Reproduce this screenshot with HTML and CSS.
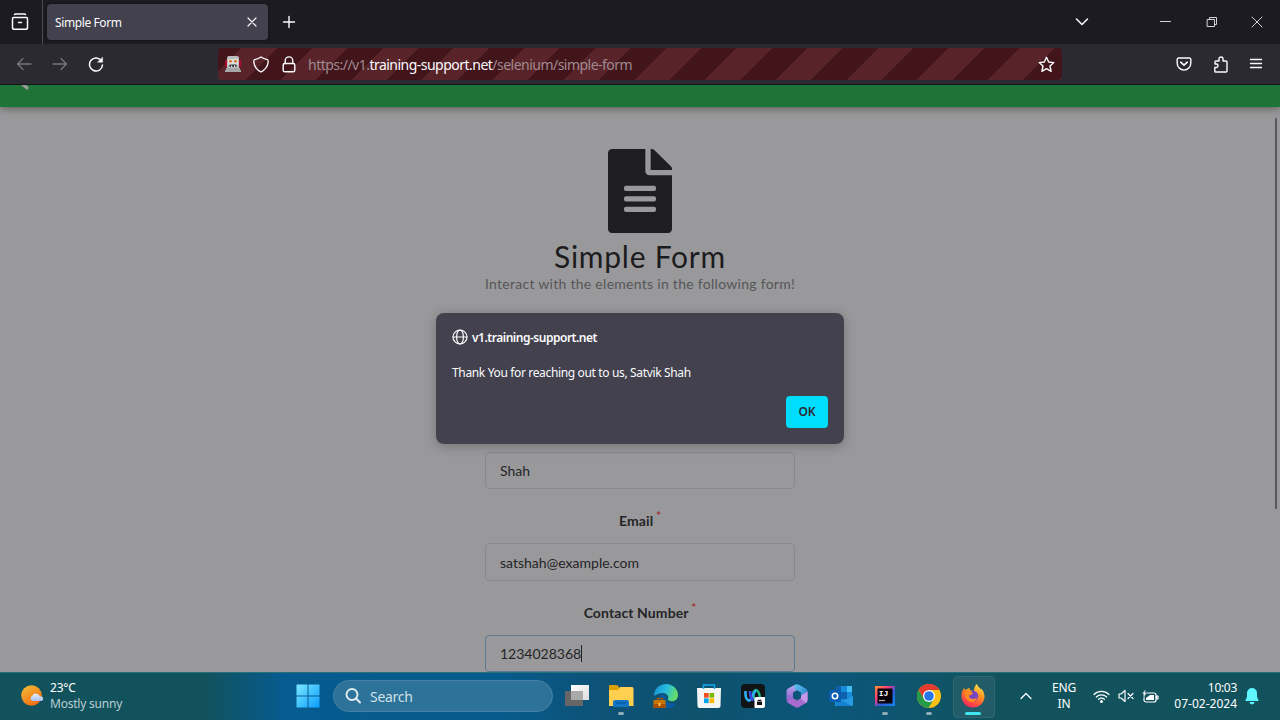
FILE: index.html
```html
<!DOCTYPE html>
<html lang="en">
<head>
<meta charset="utf-8">
<title>Simple Form</title>
<link rel="stylesheet" href="styles.css">
</head>
<body>
<div class="screen">
  <header class="tabbar">
    <div class="view-btn"><svg width="18" height="18" viewBox="0 0 18 18" class="line"><path d="M3.500 1.500 4.500 1h9l1 .5M2.500 4.500h13a1.500 1.500 0 0 1 1 1.500v8.500a1.800 1.800 0 0 1-1.800 1.800H3.300a1.800 1.800 0 0 1-1.800-1.800V6a1.500 1.500 0 0 1 1-1.500zM7.500 9.500h3" stroke-width="1.500"/></svg></div>
    <div class="tab"><span class="tab-title">Simple Form</span><svg width="10" height="10" viewBox="0 0 10 10" class="line"><path d="m1 1 8 8M9 1 1 9"/></svg></div>
    <svg class="line newtab" width="14" height="14" viewBox="0 0 14 14"><path d="M7 1.500v11M1.500 7h11" stroke-width="1.400"/></svg>
    <div class="window-tools">
      <svg class="line" width="14" height="14" viewBox="0 0 14 14"><path d="m1.500 4 5.500 5.500L12.500 4" stroke-width="1.500"/></svg>
      <svg class="line minimize" width="12" height="12" viewBox="0 0 12 12"><path d="M.5 5.500h10"/></svg>
      <svg class="line restore" width="12" height="12" viewBox="0 0 12 12"><path d="M1.500 3.500h7v7h-7zM3.500 3V1.500h7v7H9"/></svg>
      <svg class="line quit" width="12" height="12" viewBox="0 0 12 12"><path d="m1 1 10 10M11 1 1 11"/></svg>
    </div>
  </header>
  <nav class="toolbar">
    <div class="nav-buttons">
      <svg class="line dim" width="16" height="16" viewBox="0 0 16 16"><path d="M15 8H1.500M7 2.500 1.500 8 7 13.500" stroke-width="1.300"/></svg>
      <svg class="line dim" width="16" height="16" viewBox="0 0 16 16"><path d="M1 8h13.500M9 2.500 14.500 8 9 13.500" stroke-width="1.300"/></svg>
      <svg class="line" width="16" height="16" viewBox="0 0 16 16"><path d="M13.500 5A6.500 6.500 0 1 0 14.500 9" stroke-width="1.500"/><path d="M14.600 1.400v4.800H9.800z" fill="#fbfbfe" stroke-width=".5"/></svg>
    </div>
    <div class="urlbar">
      <svg width="16" height="16" viewBox="0 0 16 16"><path d="M0 4h2v7H0zm14 0h2v7h-2z" fill="#a90f2b"/><path d="M2 2q0-2 2-2h8q2 0 2 2v10H2z" fill="#bcbcbc"/><path d="M3 3h10v6H3z" fill="#ddd"/><circle cx="5.500" cy="5.200" r="1.300" fill="#d66a12"/><circle cx="10.500" cy="5.200" r="1.300" fill="#d66a12"/><path d="M4.500 8.500h7V11h-7z" fill="#333"/><path d="M6 9.500h1.200V11H6zm3 0h1.200V11H9z" fill="#eee"/><path d="M1 12h14v2h1v2H0v-2h1z" fill="#a7a6a6"/></svg>
      <svg class="line" width="16" height="17" viewBox="0 0 16 17"><path d="M8 1C6 2.500 4 3.100 1.700 3.600.6 3.900.7 5 .9 6.500c.5 4 3.100 7.300 7.100 9.500 4-2.200 6.600-5.500 7.100-9.500.2-1.500.3-2.600-.8-2.900C12 3.100 10 2.500 8 1z" stroke-width="1.400"/></svg>
      <svg class="line lock" width="14" height="17" viewBox="0 0 14 17"><path d="M3.200 7.500V4.700a3.800 3.800 0 0 1 7.600 0v2.800" stroke-width="1.400"/><rect x="1.200" y="7.500" width="11.600" height="8.300" rx="1.600" stroke-width="1.400"/></svg>
      <span class="url">https://v1.<b>training-support.net</b>/selenium/simple-form</span>
      <svg class="line star" width="17" height="17" viewBox="0 0 17 17"><path d="M8.500 1.300 10.700 6l5.100.6-3.800 3.400 1.100 5.300-4.600-2.600-4.600 2.600L5 10 1.200 6.600 6.300 6z" stroke-width="1.400"/></svg>
    </div>
    <div class="nav-tools">
      <svg class="line" width="16" height="16" viewBox="0 0 16 16"><path d="M2.500 2h11a1.300 1.300 0 0 1 1.300 1.300v4a6.800 6.800 0 0 1-13.600 0v-4A1.300 1.300 0 0 1 2.500 2z" stroke-width="1.400"/><path d="m4.700 6.200 3.300 3 3.300-3" stroke-width="1.600"/></svg>
      <svg class="line" width="16" height="17" viewBox="0 0 16 17"><path d="M2 8V5.800q0-.8.8-.8H6V3a2 2 0 0 1 4 0v2h3q1 0 1 1v9q0 1-1 1H2.600q-.8 0-.8-.8v-3.700h1.500a1.700 1.700 0 0 0 0-3.500z" stroke-width="1.400"/></svg>
      <svg class="line" width="14" height="14" viewBox="0 0 14 14"><path d="M1.500 2.500h11M1.500 6.500h11M1.500 10.500h11" stroke-width="1.300"/></svg>
    </div>
  </nav>
  <main class="page">
    <div class="banner"><svg width="9" height="6" viewBox="0 0 9 6"><path d="M0 0h5.500L8 3 6 5z" fill="#999"/></svg></div>
    <section class="intro">
      <svg width="64" height="84" viewBox="0 0 384 512" preserveAspectRatio="none"><path fill="#1e1e20" fill-rule="evenodd" d="M224 136V0H24C10.700 0 0 10.700 0 24v464c0 13.300 10.700 24 24 24h336c13.300 0 24-10.700 24-24V160H248c-13.200 0-24-10.800-24-24zM384 121.900v6.100H256V0h6.100c6.400 0 12.500 2.500 17 7l97.900 98c4.500 4.500 7 10.600 7 16.900zM108 224h168q12 0 12 12v8q0 12-12 12H108q-12 0-12-12v-8q0-12 12-12zM108 288h168q12 0 12 12v8q0 12-12 12H108q-12 0-12-12v-8q0-12 12-12zM108 352h168q12 0 12 12v8q0 12-12 12H108q-12 0-12-12v-8q0-12 12-12z"/></svg>
      <h1>Simple Form</h1>
      <p>Interact with the elements in the following form!</p>
    </section>
    <form class="form">
      <div class="input"><span class="short">Shah</span></div>
      <div class="label"><span class="email-label">Email</span><i>*</i></div>
      <div class="input"><span class="mail">satshah@example.com</span></div>
      <div class="label"><span class="contact-label">Contact Number</span><i>*</i></div>
      <div class="input focused"><span class="phone">1234028368</span></div>
    </form>
    <div class="scrollbar"></div>
    <div class="dialog">
      <div class="origin"><svg class="line" width="16" height="16" viewBox="0 0 16 16"><circle cx="8" cy="8" r="7"/><ellipse cx="8" cy="8" rx="3.400" ry="7"/><path d="M1 8h14"/></svg><strong>v1.training-support.net</strong></div>
      <div class="message"><span>Thank You for reaching out to us, Satvik Shah</span></div>
      <div class="ok">OK</div>
    </div>
  </main>
  <footer class="taskbar">
    <div class="weather">
      <svg width="24" height="24" viewBox="0 0 24 24"><defs><linearGradient id="sun" x2=".6" y2="1"><stop stop-color="#f6c33c"/><stop offset="1" stop-color="#f06c10"/></linearGradient><linearGradient id="cloud" x2="0" y2="1"><stop stop-color="#e5efff"/><stop offset="1" stop-color="#a9bff0"/></linearGradient></defs><circle cx="10.500" cy="11.500" r="10.300" fill="url(#sun)"/><path d="M11 17a3 3 0 0 1 .2-5.200 4.300 4.300 0 0 1 7.800.7 2.300 2.300 0 0 1 1.500 4.500z" fill="url(#cloud)"/></svg>
      <div><span class="degrees">23°C</span><span class="sky">Mostly sunny</span></div>
    </div>
    <div class="app"><svg width="24" height="24" viewBox="0 0 24 24"><defs><linearGradient id="win" x1="0" y1="0" x2="24" y2="24" gradientUnits="userSpaceOnUse"><stop stop-color="#7deaff"/><stop offset="1" stop-color="#079bff"/></linearGradient></defs><path d="M.5.500h11v11H.5zm12 0h11v11h-11zm-12 12h11v11H.5zm12 0h11v11h-11z" fill="url(#win)"/></svg></div>
    <div class="search"><svg width="16" height="16" viewBox="0 0 16 16" class="line"><circle cx="7" cy="6.500" r="5.500" stroke-width="1.900"/><path d="m11 10.500 4 4" stroke-width="1.900"/></svg><span>Search</span></div>
    <div class="apps">
      <div class="app"><svg width="24" height="24" viewBox="0 0 24 24"><defs><linearGradient id="pane" x2="1" y2="1"><stop stop-color="#fff"/><stop offset="1" stop-color="#dedede"/></linearGradient></defs><path d="M0 7h18v15H0z" fill="#666"/><path d="M6 1h18v15H6z" fill="url(#pane)"/><path d="M6 7h12v9H6z" fill="#aaa"/></svg></div>
      <div class="app run"><svg width="26" height="24" viewBox="0 0 26 24"><path d="M1 2q0-1 1-1h7l2 2v5H1z" fill="#dca000"/><path d="M1 6h9l2-3h12q1.500 0 1.500 1.500V22H1z" fill="#ffd04f"/><path d="M5 23v-5q0-2 2-2h12q2 0 2 2v5z" fill="#1475c7"/><path d="M8 19h10" stroke="#075595"/></svg></div>
      <div class="app"><svg width="25" height="25" viewBox="0 0 25 25"><defs><linearGradient id="edge" x2="1" y2=".3"><stop stop-color="#1889d5"/><stop offset=".55" stop-color="#25bde0"/><stop offset="1" stop-color="#63dc6d"/></linearGradient></defs><path d="M1 12C1 5 6 0 13 0s12 5 12 11c0 5-4 7-8 6-4-1-1-3-2-5-2-4-8-4-14 0z" fill="url(#edge)"/><path d="M8 10q-4 8 4 14c5 1 10-2 11-5-5 2-12 0-10-7z" fill="#0758a5"/><path d="M4.500 16v-1.500h5V16" fill="none" stroke="#9c5104" stroke-width="1.500"/><path d="M.5 16h12v8H.5z" fill="#c77400"/><path d="M.5 20h12v4H.5z" fill="#a94f05"/><path d="M5.500 19h2v3h-2z" fill="#ffc84a"/></svg></div>
      <div class="app"><svg width="24" height="24" viewBox="0 0 24 24"><path d="M0 4h24l-.5 18q0 2-2 2h-19q-2 0-2-2z" fill="#f5f5f5"/><path d="M6.500 5V1h11v4" fill="none" stroke="#19a7ed" stroke-width="1.500"/><path d="M7 9h4.700v4.700H7z" fill="#f25022"/><path d="M12.500 9h4.700v4.700h-4.700z" fill="#7fba00"/><path d="M7 14.400h4.700v4.700H7z" fill="#00a4ef"/><path d="M12.500 14.400h4.700v4.700h-4.700z" fill="#ffb900"/></svg></div>
      <div class="app"><svg width="24" height="24" viewBox="0 0 24 24"><rect width="24" height="24" rx="4" fill="#111315"/><ellipse cx="15.500" cy="11.500" rx="3" ry="5.500" transform="rotate(-12 15.500 11.500)" fill="none" stroke="#20b87c" stroke-width="2.500"/><path d="M4.500 7q-.5 8 3 9.500c4 1 4-9 8-10" fill="none" stroke="#2eaaf0" stroke-width="2.700"/><path d="M9 7q0 7 3.500 9.500" fill="none" stroke="#3c48dc" stroke-width="2.700"/><path d="M13.500 15q0-2 2-2H24v9q0 2-2 2h-8.500z" fill="#fff"/><path d="M16 17.500h5V21h-5zm.7-1.800h3.600v1.200h-3.600z" fill="#111"/></svg></div>
      <div class="app"><svg width="22" height="24" viewBox="0 0 22 24"><defs><linearGradient id="suite-left" x2="0" y2="1"><stop stop-color="#b9a6f0"/><stop offset="1" stop-color="#8b5bc8"/></linearGradient><linearGradient id="suite-right" x2="1" y2="1"><stop stop-color="#60c6f0"/><stop offset="1" stop-color="#2877c5"/></linearGradient></defs><path d="M9 .8 2 4.500Q.5 5.500.5 7v9q0 2 2 1.500L7 15V8.500L13 5V2z" fill="url(#suite-left)"/><path d="M9 .8q2-1 4 0l7 4q1.500 1 1.500 2.500V15L15 11.500V8.500L8.500 5q-1-2 .5-4.200z" fill="url(#suite-right)"/><path d="m1 17 6-3 4 2.500 4-2.500 6.500-6v8q0 2-1.500 3l-7 4q-2 1-4 0l-7-4q-1-1-1-2z" fill="#a76bd0"/><path d="m15 11.500 6.500-4V16q0 2-1.500 3l-5-4z" fill="#c797e8"/></svg></div>
      <div class="app"><svg width="24" height="24" viewBox="0 0 24 24"><path d="M7 2h16v20H7z" fill="#168bda"/><path d="M7 2h5v6H7z" fill="#1060ad"/><path d="M12 8h6v7h-6z" fill="#1061ad"/><path d="M18 2h5v6h-5z" fill="#43bdf2"/><path d="M6 22v-9l8 4 10-5v9q0 1-1 1z" fill="#279be2"/><path d="m6 13 17 9H7z" fill="#1681d0"/><rect y="6" width="12" height="12" rx="1" fill="#075db1"/><circle cx="6" cy="12" r="2.700" fill="none" stroke="#fff" stroke-width="1.600"/></svg></div>
      <div class="app run"><svg width="20" height="20" viewBox="0 0 20 20"><defs><linearGradient id="idea" x2="1" y2="1"><stop stop-color="#ff9632"/><stop offset=".35" stop-color="#fb3a75"/><stop offset=".6" stop-color="#295ddd"/><stop offset="1" stop-color="#1687ef"/></linearGradient></defs><path d="M0 0h20v20H0z" fill="url(#idea)"/><path d="M2.500 2.500h15v15h-15z" fill="#0b0209"/><path d="M4 14.500h6" stroke="#aaa" stroke-width="1.300"/><text x="3.800" y="10" class="idea-text">IJ</text></svg></div>
      <div class="app run"><svg width="24" height="24" viewBox="0 0 24 24"><circle cx="12" cy="12" r="12" fill="#fbc116"/><path d="M1.600 6A12 12 0 0 1 22.400 6H12L7 15z" fill="#e33b2e"/><path d="M1.600 6A12 12 0 0 0 11.500 24L17 15H7z" fill="#239b4b"/><circle cx="12" cy="12" r="6" fill="#fff"/><circle cx="12" cy="12" r="4.800" fill="#2877e9"/></svg></div>
      <div class="app run active"><svg width="24" height="24" viewBox="0 0 24 24"><defs><linearGradient id="fox" x1=".8" y1="0" x2=".3" y2="1"><stop stop-color="#ffe94a"/><stop offset=".45" stop-color="#ff8a20"/><stop offset="1" stop-color="#f82060"/></linearGradient></defs><path d="M.5 12Q.5 7 3 4l1.500 2Q7 4 9 4l-.5 2L13 7q0-5 3-7 1 3 3 4l1 2 .5-1.500Q24 9 23.500 13A11.500 11 0 0 1 .5 12z" fill="url(#fox)"/><circle cx="12" cy="12" r="5.300" fill="#7646c2"/><path d="M4 8q3 0 5-1l3 2q-1 2-4 2.500-.5 3 4 3.500 3 0 4-2-1 5-6 5-6-1-6-10z" fill="#ff8a20"/></svg></div>
    </div>
    <div class="tray">
      <svg class="line chevron" width="12" height="12" viewBox="0 0 12 12"><path d="m1 8.500 5-5 5 5" stroke-width="1.300"/></svg>
      <div class="language"><span>ENG</span><span>IN</span></div>
      <svg class="line wifi" width="17" height="15" viewBox="0 0 17 15"><path d="M1 5.500a10.600 10.600 0 0 1 15 0M3.300 8a7.400 7.400 0 0 1 10.400 0M5.500 10.300a4.200 4.200 0 0 1 6 0" stroke-width="1.200"/><circle cx="8.500" cy="12.500" r="1.500" fill="#fff" stroke="none"/></svg>
      <svg class="line volume" width="16" height="14" viewBox="0 0 16 14"><path d="M1 5h2l4-3.500v11L3 9H1zM10 4.500l5 5M15 4.500l-5 5"/></svg>
      <svg class="line battery" width="17" height="15" viewBox="0 0 17 15"><rect x="2" y="4" width="12" height="9" rx="2"/><path d="M14.500 7v3H16V7z"/><path d="M4 11V9l4-3h4v5z" fill="#fff" stroke="none"/><path d="M3.500 0 0 5h2L1 9l4-5H3.500z" fill="#fff" stroke="#12525d" stroke-width=".5"/></svg>
      <div class="clock"><span class="time">10:03</span><span class="date">07-02-2024</span></div>
      <svg width="14" height="17" viewBox="0 0 14 17"><path d="M7 0a5 5 0 0 1 5 5v4l1.500 3q.3 1-.5 1H1q-.8 0-.5-1L2 9V5a5 5 0 0 1 5-5zM4.500 14h5a2.500 2.500 0 0 1-5 0z" fill="#60f6ff"/></svg>
    </div>
  </footer>
</div>
</body>
</html>
```
FILE: styles.css
```css
* { box-sizing: border-box; }
body { margin: 0; font-family: "Noto Sans", "Open Sans", sans-serif; }
svg { display: block; flex: none; }
.screen { width: 1280px; height: 720px; display: flex; flex-direction: column; overflow: hidden; }
.line { fill: none; stroke: #fbfbfe; stroke-width: 1.2; stroke-linecap: round; stroke-linejoin: round; }
.tabbar { height: 44px; flex: none; display: flex; align-items: center; background: #1c1b22; }
.view-btn { width: 43px; height: 44px; padding: 13px 0 0 11px; border-right: 1px solid #4b4a52; }
.tab { width: 221px; height: 36px; margin-left: 4px; padding: 0 11px 0 8px; display: flex; align-items: center; justify-content: space-between; border-radius: 4px; background: #42414d; box-shadow: 0 0 3px #0c0c10; color: #fbfbfe; }
.tab-title { font-size: 12px; letter-spacing: -.4px; white-space: nowrap; }
.newtab { margin-left: 14px; }
.window-tools { margin-left: auto; display: flex; align-items: center; padding-right: 17px; }
.minimize { margin-left: 71px; }
.restore { margin-left: 34px; }
.quit { margin-left: 33px; }
.minimize, .restore, .quit { stroke: #d5d5d8; stroke-width: 1; }
.toolbar { height: 41px; flex: none; display: flex; align-items: center; background: #2b2a33; border-bottom: 1px solid #15141b; }
.nav-buttons { width: 218px; padding-left: 16px; display: flex; gap: 20px; }
.dim { stroke: #77767d; }
.urlbar { width: 844px; height: 32px; padding: 0 7px; display: flex; align-items: center; gap: 12px; border-radius: 4px; background: repeating-linear-gradient(135deg, #42151b 0, #42151b 16.8px, #582329 16.8px, #582329 41.8px, #42151b 41.8px, #42151b 50px); }
.lock { margin-left: 1px; }
.url { font-size: 14px; color: #a18a90; white-space: nowrap; letter-spacing: -.52px; }
.url b { font-weight: 400; color: #fbfbfe; }
.star { margin-left: auto; }
.nav-tools { margin-left: auto; display: flex; align-items: center; gap: 20px; padding-right: 17px; }
.nav-tools svg:first-child { margin-right: 1px; }
.page { position: relative; height: 587px; flex: none; overflow: hidden; background: #99999b; }
.banner { height: 22px; padding-left: 21px; background: #1f7337; box-shadow: 0 1px 8px #555; }
.intro { padding-top: 42px; display: flex; flex-direction: column; align-items: center; font-family: Lato, sans-serif; white-space: nowrap; }
.intro h1 { margin: 5px 0 0; font-size: 30px; line-height: 36px; font-weight: 400; color: #1c1c1e; letter-spacing: .75px; }
.intro p { margin: 1px 0 0; font-size: 14px; line-height: 18px; color: #565658; letter-spacing: .28px; }
.form { width: 310px; margin: 159px auto 0; font-family: Lato, sans-serif; color: #252527; }
.input { height: 37px; padding: 0 14px; display: flex; align-items: center; border: 1px solid #89898b; border-radius: 4px; font-size: 14px; line-height: 17px; }
.label { height: 54px; display: flex; justify-content: center; align-items: center; font-size: 14px; font-weight: 700; letter-spacing: .1px; padding-top: 8px; }
.input:nth-child(3) { height: 38px; }
.label i { margin: -10px 0 0 3px; color: #a52d36; font-size: 11px; font-style: normal; }
.focused { border-color: #597c90; }
.phone { border-right: 1px solid #222; }
.scrollbar { position: absolute; right: 3px; top: 33px; width: 2px; height: 391px; border-radius: 1px; background: #565658; }
.dialog { position: absolute; left: 436px; top: 228px; width: 408px; height: 131px; padding: 16px; border-radius: 8px; background: #42414d; box-shadow: 0 2px 12px rgba(0,0,0,.25); color: #fbfbfe; display: flex; flex-direction: column; }
.origin { display: flex; align-items: center; gap: 4px; height: 16px; font-size: 12px; white-space: nowrap; }
.origin strong { font-weight: 600; letter-spacing: -.48px; }
.message { margin-top: 18px; height: 20px; font-size: 12px; line-height: 20px; white-space: nowrap; letter-spacing: -.35px; }
.ok { margin: 13px 0 0 auto; width: 42px; height: 32px; flex: none; border-radius: 4px; background: #00ddff; color: #2b2a33; text-align: center; font-size: 12px; font-weight: 600; line-height: 32px; }
.taskbar { height: 48px; flex: none; display: flex; align-items: center; border-top: 1px solid #26707a; color: #fff; background: linear-gradient(90deg, #12525d 0, #12525d 205px, #065b90 285px, #075b8c 390px, #075b8c 500px, #0d5379 590px, #0e526d 700px, #0b567b 820px, #0d5570 890px, #12525d 1000px); }
.taskbar > * { margin-bottom: 1px; }
.weather { width: 286px; padding-left: 21px; display: flex; gap: 5px; align-items: center; }
.weather div { display: flex; flex-direction: column; font-size: 12px; line-height: 16px; white-space: nowrap; }
.degrees { letter-spacing: -.2px; }
.sky { color: #b8ced1; letter-spacing: -.22px; }
.app { position: relative; width: 44px; height: 46px; display: grid; place-items: center; flex: none; }
.search { width: 220px; height: 32px; margin: 0 2px 1px 3px; padding-left: 11px; display: flex; align-items: center; gap: 9px; border: 1px solid #4682a3; border-radius: 16px; background: #2d7299; color: #d1e0e8; font-size: 14px; letter-spacing: -.3px; }
.search .line { stroke: #e2edf2; }
.apps { display: flex; }
.run::after { content: ""; position: absolute; left: 19px; bottom: 4px; width: 6px; height: 3px; border-radius: 2px; background: #8eabb6; }
.active::before { content: ""; position: absolute; left: 2px; top: 3px; width: 40px; height: 40px; border-radius: 4px; border: 1px solid #2f6673; background: #235c69; }
.active svg { position: relative; }
.active::after { left: 14px; width: 16px; background: #40e5ef; }
.idea-text { fill: #fff; font: 700 8px "Liberation Mono", monospace; }
.tray { margin-left: auto; padding-right: 21px; display: flex; align-items: center; font-size: 12px; line-height: 16px; }
.language { width: 26px; margin-left: 19px; display: flex; flex-direction: column; align-items: center; letter-spacing: -.2px; }
.wifi { margin-left: 16px; }
.volume { margin-left: 8px; }
.battery { margin-left: 8px; }
.clock { width: 64px; margin: 0 8px 0 14px; display: flex; flex-direction: column; align-items: flex-end; white-space: nowrap; }
.time { letter-spacing: -.3px; }
.date { letter-spacing: 0; }
```
